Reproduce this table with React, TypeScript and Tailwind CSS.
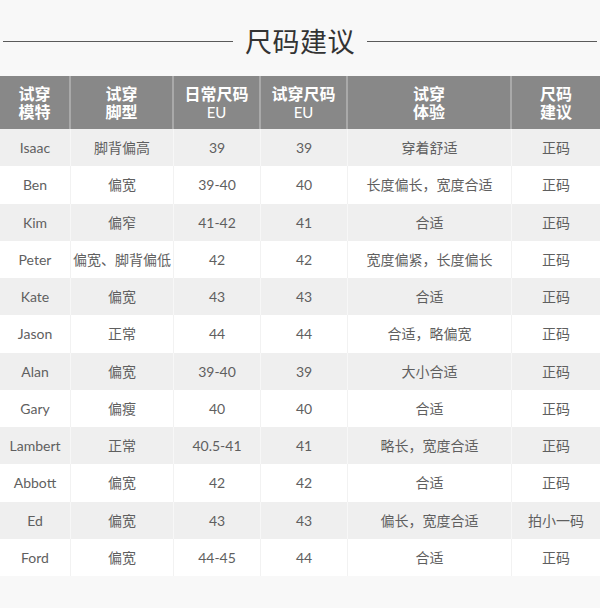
const headers: { lines: string[]; eu?: boolean }[] = [
  { lines: ["试穿", "模特"] },
  { lines: ["试穿", "脚型"] },
  { lines: ["日常尺码"], eu: true },
  { lines: ["试穿尺码"], eu: true },
  { lines: ["试穿", "体验"] },
  { lines: ["尺码", "建议"] },
];

const rows = [
  ["Isaac", "脚背偏高", "39", "39", "穿着舒适", "正码"],
  ["Ben", "偏宽", "39-40", "40", "长度偏长，宽度合适", "正码"],
  ["Kim", "偏窄", "41-42", "41", "合适", "正码"],
  ["Peter", "偏宽、脚背偏低", "42", "42", "宽度偏紧，长度偏长", "正码"],
  ["Kate", "偏宽", "43", "43", "合适", "正码"],
  ["Jason", "正常", "44", "44", "合适，略偏宽", "正码"],
  ["Alan", "偏宽", "39-40", "39", "大小合适", "正码"],
  ["Gary", "偏瘦", "40", "40", "合适", "正码"],
  ["Lambert", "正常", "40.5-41", "41", "略长，宽度合适", "正码"],
  ["Abbott", "偏宽", "42", "42", "合适", "正码"],
  ["Ed", "偏宽", "43", "43", "偏长，宽度合适", "拍小一码"],
  ["Ford", "偏宽", "44-45", "44", "合适", "正码"],
];

const cols = "grid grid-cols-[71px_103px_87px_87px_164px_88px]";

export default function App() {
  return (
    <div
      className="w-[600px] h-[608px] bg-[#f8f8f8] overflow-hidden"
      style={{ fontFamily: 'Lato, "Noto Sans CJK SC", sans-serif' }}
    >
      <div className="h-[76px] flex items-center px-[3px] pt-[6px] pb-0">
        <div className="flex-1 h-px bg-[#5a5a5a]" />
        <h1 className="px-[12px] text-[27px] leading-none text-[#333] font-normal tracking-[0.5px]">
          尺码建议
        </h1>
        <div className="flex-1 h-px bg-[#5a5a5a]" />
      </div>

      <div className={`${cols} h-[53px] bg-[#888888]`}>
        {headers.map((h, i) => (
          <div
            key={i}
            className={`flex flex-col items-center justify-center text-white text-[16px] leading-[18px] ${
              i < headers.length - 1 ? "border-r-2 border-[#a9a9a9]" : ""
            }`}
          >
            {h.lines.map((l) => (
              <span key={l} className="font-bold">
                {l}
              </span>
            ))}
            {h.eu && <span className="text-[15px] font-normal">EU</span>}
          </div>
        ))}
      </div>

      {rows.map((r, ri) => (
        <div
          key={ri}
          className={`${cols} h-[37.25px] ${
            ri % 2 === 0 ? "bg-[#efefef]" : "bg-white"
          }`}
        >
          {r.map((c, ci) => (
            <div
              key={ci}
              className={`flex items-center justify-center text-[14px] text-[#5f5f5f] whitespace-nowrap ${
                ci < r.length - 1
                  ? ri % 2 === 0
                    ? "border-r border-[#f7f7f7]"
                    : "border-r border-[#f2f2f2]"
                  : ""
              }`}
            >
              {c}
            </div>
          ))}
        </div>
      ))}
    </div>
  );
}
